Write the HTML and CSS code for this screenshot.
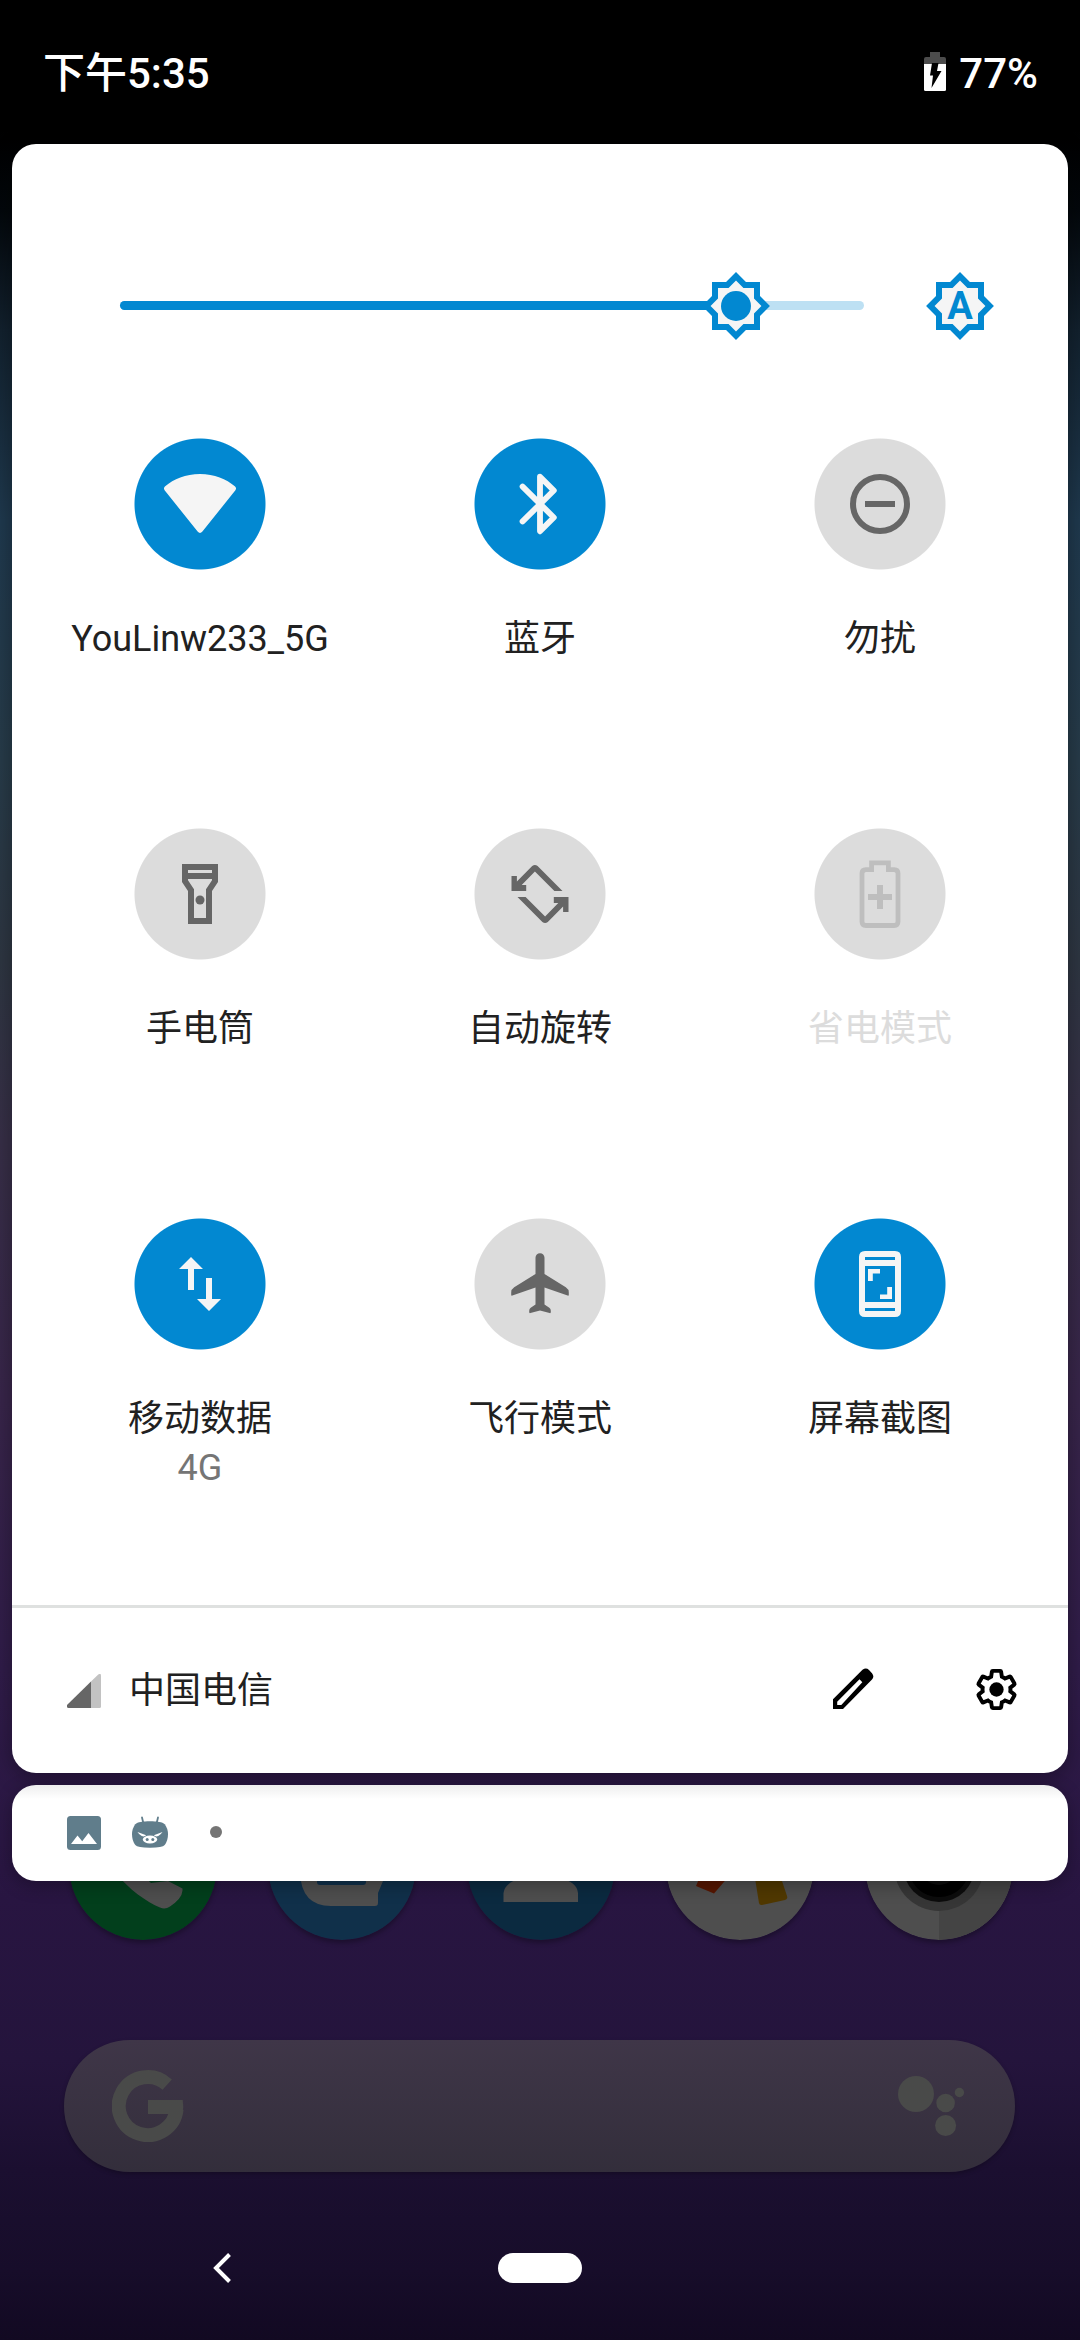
FILE: index.html
```html
<!DOCTYPE html>
<html lang="zh-CN">
<head>
<meta charset="utf-8">
<title>快捷设置</title>
<link rel="stylesheet" href="styles.css">
</head>
<body>
<div class="screen">
  <div class="launcher">
    <div class="dock">
      <svg class="app" viewBox="0 0 148 148"><circle cx="74" cy="74" r="74" fill="#023f1c"/><path d="M46 80C60 98 78 110 91 115.500q5 2.500 10 -1q12-8 12.500-16v-2L99 89 82 91l-9-8z" fill="#4e4e4e"/></svg>
      <svg class="app" viewBox="0 0 148 148"><circle cx="74" cy="74" r="74" fill="#10304a"/><path d="M32 80Q33 114 63 114H107q3 0 3-3V101L115 89V80z" fill="#4e4e4e"/><path d="M49 80h49v10q0 3-3 3H52q-3 0-3-3z" fill="#10304a"/></svg>
      <svg class="app" viewBox="0 0 148 148"><circle cx="74" cy="74" r="74" fill="#0b2a40"/><path d="M36.500 110V101Q38 90 55 86H93q17 4 18 15v9z" fill="#4e4e4e"/></svg>
      <svg class="app" viewBox="0 0 148 148"><circle cx="74" cy="74" r="74" fill="#4e4e4e"/><path d="M36 80L30 94l18 7.500L64 83z" fill="#571600"/><path d="M88 80l5 31q.500 2.500 3 2l23-5q3-1 2-4L113 80z" fill="#503800"/></svg>
      <svg class="app" viewBox="0 0 148 148"><circle cx="74" cy="74" r="74" fill="#4e4e4e"/><path d="M74 0a74 74 0 0 1 0 148z" fill="#444"/><circle cx="74" cy="74" r="45" fill="#363636"/><circle cx="74" cy="74" r="36" fill="#0c0c0c"/><circle cx="74" cy="74" r="31" fill="#000"/><circle cx="74" cy="74" r="19" fill="#0e0e0e"/></svg>
    </div>
    <div class="search">
      <svg class="google" viewBox="0 0 72 72"><path d="M55.200 14.600A29 29 0 1 0 64.600 39" fill="none" stroke="#494a49" stroke-width="14"/><path d="M36 30H70.700Q72 37 70.500 44H36z" fill="#494a49"/></svg>
      <svg class="assistant" viewBox="0 0 68 68"><g fill="#494a49"><circle cx="18" cy="22" r="18"/><circle cx="47.600" cy="31" r="9.300"/><circle cx="47.600" cy="53.500" r="10.500"/><circle cx="61.400" cy="20.500" r="4.700"/></g></svg>
    </div>
    <div class="nav">
      <svg class="back" viewBox="0 0 20 32"><path d="M17.500 2.500L4 16l13.500 13.500" fill="none" stroke="#fff" stroke-width="4"/></svg>
      <span class="home"></span>
    </div>
  </div>

  <div class="shade">
    <header class="status">
      <span class="clock">下午5:35</span>
      <span class="power">
        <svg class="battery" viewBox="0 0 22 39"><path d="M6 0h10v5h4q2 0 2 2v5H0V7q0-2 2-2h4z" fill="#4c4c4c"/><path d="M0 12h22v25.500q0 1.500-1.500 1.500h-19Q0 39 0 37.500z" fill="#fff"/><path d="M8 11h6.500l-1.500 8h4.500L7.500 36l1.500-12.500H6z" fill="#000"/></svg>
        <span>77%</span>
      </span>
    </header>

    <main class="panel">
      <div class="brightness">
        <div class="track">
          <div class="filled" style="width:82.800%"></div>
          <svg class="thumb" viewBox="0 0 24 24"><path d="M20 8.690V4h-4.690L12 .690 8.690 4H4v4.690L.690 12 4 15.310V20h4.690L12 23.310 15.310 20H20v-4.690L23.310 12z" fill="#0288d1"/><path d="M18 9.520V6h-3.520L12 3.520 9.520 6H6v3.520L3.520 12 6 14.480V18h3.520L12 20.480 14.480 18H18v-3.520L20.480 12z" fill="#f5f5f5"/><circle cx="12" cy="12" r="5" fill="#0288d1"/></svg>
        </div>
        <div class="auto">
          <svg viewBox="0 0 24 24"><path d="M20 8.690V4h-4.690L12 .690 8.690 4H4v4.690L.690 12 4 15.310V20h4.690L12 23.310 15.310 20H20v-4.690L23.310 12z" fill="#0288d1"/><path d="M18 9.520V6h-3.520L12 3.520 9.520 6H6v3.520L3.520 12 6 14.480V18h3.520L12 20.480 14.480 18H18v-3.520L20.480 12z" fill="#f5f5f5"/></svg>
          <span class="auto-letter">A</span>
        </div>
      </div>

      <div class="tiles">
        <div class="tile on">
          <div class="disc"><svg viewBox="0 0 24 24"><path d="M12 2C7.200 2 3.200 3.700.400 6.100Q-.300 6.700.200 7.400L11.200 21.200q.800.900 1.600 0L23.800 7.400q.500-.700-.200-1.300C20.800 3.700 16.800 2 12 2z"/></svg></div>
          <span class="label">YouLinw233_5G</span>
        </div>
        <div class="tile on">
          <div class="disc"><svg viewBox="0 0 24 24"><path d="M6.200 6.200L16.600 16.500 12 21.100V2.900l4.600 4.600L6.200 17.800" fill="none" stroke="currentColor" stroke-width="1.950" stroke-linecap="round" stroke-linejoin="round"/></svg></div>
          <span class="label">蓝牙</span>
        </div>
        <div class="tile">
          <div class="disc"><svg viewBox="0 0 24 24"><circle cx="12" cy="12" r="9" fill="none" stroke="currentColor" stroke-width="2"/><path d="M7 11h10v2H7z"/></svg></div>
          <span class="label">勿扰</span>
        </div>
        <div class="tile">
          <div class="disc"><svg viewBox="0 0 24 24"><path fill-rule="evenodd" d="M6 2h12v6l-2 3v11H8V11L6 8zM8 4v1h8V4zM8 7v.400l2 3V20h4v-9.600l2-3V7z"/><circle cx="12" cy="14" r="1.500"/></svg></div>
          <span class="label">手电筒</span>
        </div>
        <div class="tile">
          <div class="disc"><svg viewBox="0 0 24 24"><path id="turn" d="M16.800 11h2.700L11.200 2.700q-.900-.750-1.800 0L4.300 7.800V6H2.500v5h4.900V9H5.900L10.300 4.500z"/><use href="#turn" transform="rotate(180 12 12)"/></svg></div>
          <span class="label">自动旋转</span>
        </div>
        <div class="tile disabled">
          <div class="disc"><svg viewBox="0 0 24 24"><path d="M9.200 3.850V1.600h5.600v2.250h1.900q1.300 0 1.300 1.300V21.200q0 1.300-1.300 1.300H7.300Q6 22.500 6 21.200V5.150q0-1.300 1.300-1.300z" fill="none" stroke="currentColor" stroke-width="1.600"/><path d="M8 12h3V9h2v3h3v2h-3v3h-2v-3H8z"/></svg></div>
          <span class="label">省电模式</span>
        </div>
        <div class="tile on">
          <div class="disc"><svg viewBox="0 0 24 24"><path d="M9 3l4 4h-3v7H8V7H5zM14 10h2v7h3l-4 4-4-4h3z"/></svg></div>
          <span class="label">移动数据</span>
          <span class="sub">4G</span>
        </div>
        <div class="tile">
          <div class="disc"><svg viewBox="0 0 24 24"><path d="M12 1.750c-.850 0-1.500.700-1.500 1.500V8.700L3.400 13.100q-1 .650-1 1.700v.800q0 .400.400.250L10.500 13.200v5.600L8.900 19.900q-.500.400-.500 1v.550q0 .350.400.250L12 20.800l3.200.9q.4.100.4-.250v-.550q0-.600-.5-1L13.500 18.800V13.200l7.700 2.650q.400.150.400-.250v-.800q0-1.050-1-1.700L13.500 8.700V3.250c0-.800-.650-1.500-1.500-1.500z"/></svg></div>
          <span class="label">飞行模式</span>
        </div>
        <div class="tile on">
          <div class="disc"><svg viewBox="0 0 24 24"><path fill-rule="evenodd" d="M7 1h10q2 0 2 2v18q0 2-2 2H7q-2 0-2-2V3q0-2 2-2zM7 3v1h10V3zM7 6v12h10V6zM7 20v1h10v-1z"/><path d="M8 7h4v1.500H9.600V11H8zM16 17h-4v-1.500h2.400V13H16z"/></svg></div>
          <span class="label">屏幕截图</span>
        </div>
      </div>

      <footer class="footer">
        <svg class="signal" viewBox="0 0 34 34"><path d="M31 .700q3-2 3 1V32.500q0 1.500-1.500 1.500H24V7.500z" fill="#c2c2c2"/><path d="M24 7.500V34H1.500Q0 34 0 32.500v-1.500z" fill="#666"/></svg>
        <span class="carrier">中国电信</span>
        <svg class="edit" viewBox="0 0 54 54"><path fill-rule="evenodd" d="M7 37.300L36.500 7.800q3.500-2.500 6.500.200l3 3.200q2.700 3.300 0 6.300L17 47H7zM11.200 39.700V43h4.100L36.300 20.300 33.500 17.300z"/></svg>
        <svg class="gear" viewBox="0 0 24 24"><path transform="translate(1.080 1.080) scale(.910)" fill="none" stroke="#000" stroke-width="2.100" d="M19.430 12.980c.04-.32.07-.64.07-.98s-.03-.66-.07-.98l2.110-1.650c.19-.15.24-.42.12-.64l-2-3.460a.5.5 0 0 0-.61-.22l-2.490 1c-.52-.4-1.080-.73-1.690-.98l-.38-2.650A.488.488 0 0 0 14 2h-4c-.25 0-.46.18-.49.42l-.38 2.650c-.61.25-1.170.59-1.690.98l-2.490-1a.566.566 0 0 0-.61.22l-2 3.460c-.13.22-.07.49.12.64l2.110 1.650c-.04.32-.07.65-.07.98s.03.66.07.98l-2.110 1.650c-.19.15-.24.42-.12.64l2 3.460a.5.5 0 0 0 .61.22l2.490-1c.52.4 1.080.73 1.690.98l.38 2.650c.03.24.24.42.49.42h4c.25 0 .46-.18.49-.42l.38-2.650c.61-.25 1.170-.59 1.690-.98l2.490 1a.566.566 0 0 0 .61-.22l2-3.460c.12-.22.07-.49-.12-.64z"/><circle cx="12" cy="12" r="3.500"/></svg>
      </footer>
    </main>

    <section class="notices">
      <svg class="picture" viewBox="0 0 34 34"><rect width="34" height="34" rx="3.500" fill="#607d8b"/><path d="M4 28l6.500-8.500 4.700 5.700L21.500 17 30 28z" fill="#fff"/></svg>
      <svg class="pig" viewBox="0 0 36 36"><path d="M10 2.500l1.200 5M26 2.500l-1.200 5" stroke="#607d8b" stroke-width="1.800" stroke-linecap="round"/><path d="M18 6.300c7 0 12.500.7 14.700 3Q36 13.500 36 19.500T32.700 30q-2.200 2.700-14.700 2.700T3.300 30Q0 25.500 0 19.500T3.300 9.300C5.500 7 11 6.300 18 6.300z" fill="#607d8b"/><path d="M5.500 17l8.700 3.300q-2 1.800-4.500.600Q7 19.500 5.500 17zM30.500 17l-8.700 3.300q2 1.800 4.500.600Q29 19.500 30.500 17z" fill="#fff"/><ellipse cx="18" cy="24.500" rx="7.200" ry="4" fill="#fff"/><circle cx="15.200" cy="24.500" r="1.500" fill="#607d8b"/><circle cx="20.800" cy="24.500" r="1.500" fill="#607d8b"/></svg>
      <span class="more"></span>
    </section>
  </div>
</div>
</body>
</html>
```

FILE: styles.css
```css
* { box-sizing: border-box; }

body {
  margin: 0;
  font-family: Roboto, "Noto Sans CJK SC", sans-serif;
}

svg { display: block; flex: none; }

.screen {
  position: relative;
  width: 1080px;
  height: 2340px;
  overflow: hidden;
  background: linear-gradient(#000 0, #000 130px, #03070b 210px, #12212e 330px, #1f394e 520px, #273b49 760px, #2e3642 960px, #372f47 1140px, #38254a 1400px, #301c49 1670px, #281541 1900px, #24143c 2060px, #1b0f30 2170px, #170d2a 2270px, #120922 2340px);
}

/* Home screen underneath the shade */
.launcher {
  display: flex;
  flex-direction: column;
  height: 100%;
  padding-top: 1792px;
}

.dock {
  display: flex;
  justify-content: space-between;
  padding: 0 67.500px 0 68.500px;
}

.app {
  width: 148px;
  height: 148px;
  border-radius: 50%;
  box-shadow: 0 3px 5px rgba(0, 0, 0, .3);
}

.search {
  display: flex;
  align-items: center;
  justify-content: space-between;
  width: 951px;
  height: 132px;
  margin: 100px 0 0 64px;
  padding: 0 49px 0 48px;
  border-radius: 66px;
  background: linear-gradient(#3f3648, #332e3b);
  box-shadow: 0 2px 4px rgba(0, 0, 0, .25);
}

.google { width: 72px; height: 72px; }
.assistant { width: 68px; height: 68px; }

.nav {
  display: flex;
  align-items: center;
  gap: 266px;
  height: 32px;
  margin: 80px 0 0 212px;
}

.back { width: 20px; height: 32px; }

.home {
  width: 84px;
  height: 30px;
  border-radius: 15px;
  background: #fff;
}

/* Pulled-down shade */
.shade {
  position: absolute;
  inset: 0;
  padding: 0 12px;
}

.status {
  display: flex;
  justify-content: space-between;
  height: 144px;
  padding: 49px 30px 0 31px;
  color: #fff;
  font-size: 42px;
  font-weight: 500;
  line-height: 50px;
}

.power { display: flex; gap: 13px; }
.battery { width: 22px; height: 39px; margin-top: 3px; }

.panel {
  display: flex;
  flex-direction: column;
  height: 1629px;
  border-radius: 24px;
  background: #fff;
  box-shadow: 0 4px 22px rgba(0, 0, 0, .35);
}

.brightness {
  display: flex;
  align-items: center;
  height: 72px;
  margin: 126px 72px 0 108px;
}

.track {
  position: relative;
  width: 744px;
  height: 9px;
  margin-bottom: 1px;
  border-radius: 5px;
  background: #bde0f3;
}

.filled {
  height: 100%;
  border-radius: 5px;
  background: #0288d1;
}

.thumb {
  position: absolute;
  left: 580px;
  top: -31px;
  width: 72px;
  height: 72px;
}

.auto {
  position: relative;
  width: 72px;
  height: 72px;
  margin-left: 60px;
}

.auto-letter {
  position: absolute;
  inset: 0;
  color: #0288d1;
  font-size: 38px;
  font-weight: 700;
  line-height: 72px;
  text-align: center;
}

.tiles {
  display: grid;
  grid-template-columns: repeat(3, 340px);
  grid-auto-rows: 390px;
  justify-content: center;
  height: 1167px;
  margin-top: 96px;
}

.tile {
  --disc: #dcdcdc;
  display: flex;
  flex-direction: column;
  align-items: center;
  color: #212121;
  font-size: 36px;
  line-height: 49px;
}

.disc {
  display: flex;
  align-items: center;
  justify-content: center;
  width: 132px;
  height: 132px;
  margin-bottom: 45px;
  background: radial-gradient(circle closest-side, var(--disc) 65px, transparent 66px);
  color: #666;
}

.disc svg { width: 72px; height: 72px; fill: currentColor; overflow: visible; }
.on { --disc: #0288d1; }
.on .disc { color: #f5f5f5; }
.disabled { color: #dcdcdc; }
.disabled .disc { color: #bebebe; }
.sub { color: #757575; }

.footer {
  display: flex;
  align-items: center;
  height: 168px;
  border-top: 3px solid #dfe1e0;
  padding: 0 47px 0 55px;
  color: #212121;
  font-size: 36px;
  line-height: 49px;
}

.signal { width: 34px; height: 34px; }
.carrier { margin: 1px 0 0 28px; }
.edit { width: 54px; height: 54px; margin: -3px 0 0 auto; }
.gear { width: 49px; height: 49px; margin: -3px 0 0 92px; }

.notices {
  display: flex;
  align-items: center;
  height: 96px;
  margin-top: 12px;
  padding-left: 55px;
  border-radius: 24px;
  background: linear-gradient(#eee, #fff 14px);
  box-shadow: 0 4px 18px rgba(0, 0, 0, .3);
}

.picture { width: 34px; height: 34px; }
.pig { width: 36px; height: 36px; margin-left: 31px; }
.more { width: 12px; height: 12px; margin: -2px 0 0 42px; border-radius: 50%; background: #757575; }
```
